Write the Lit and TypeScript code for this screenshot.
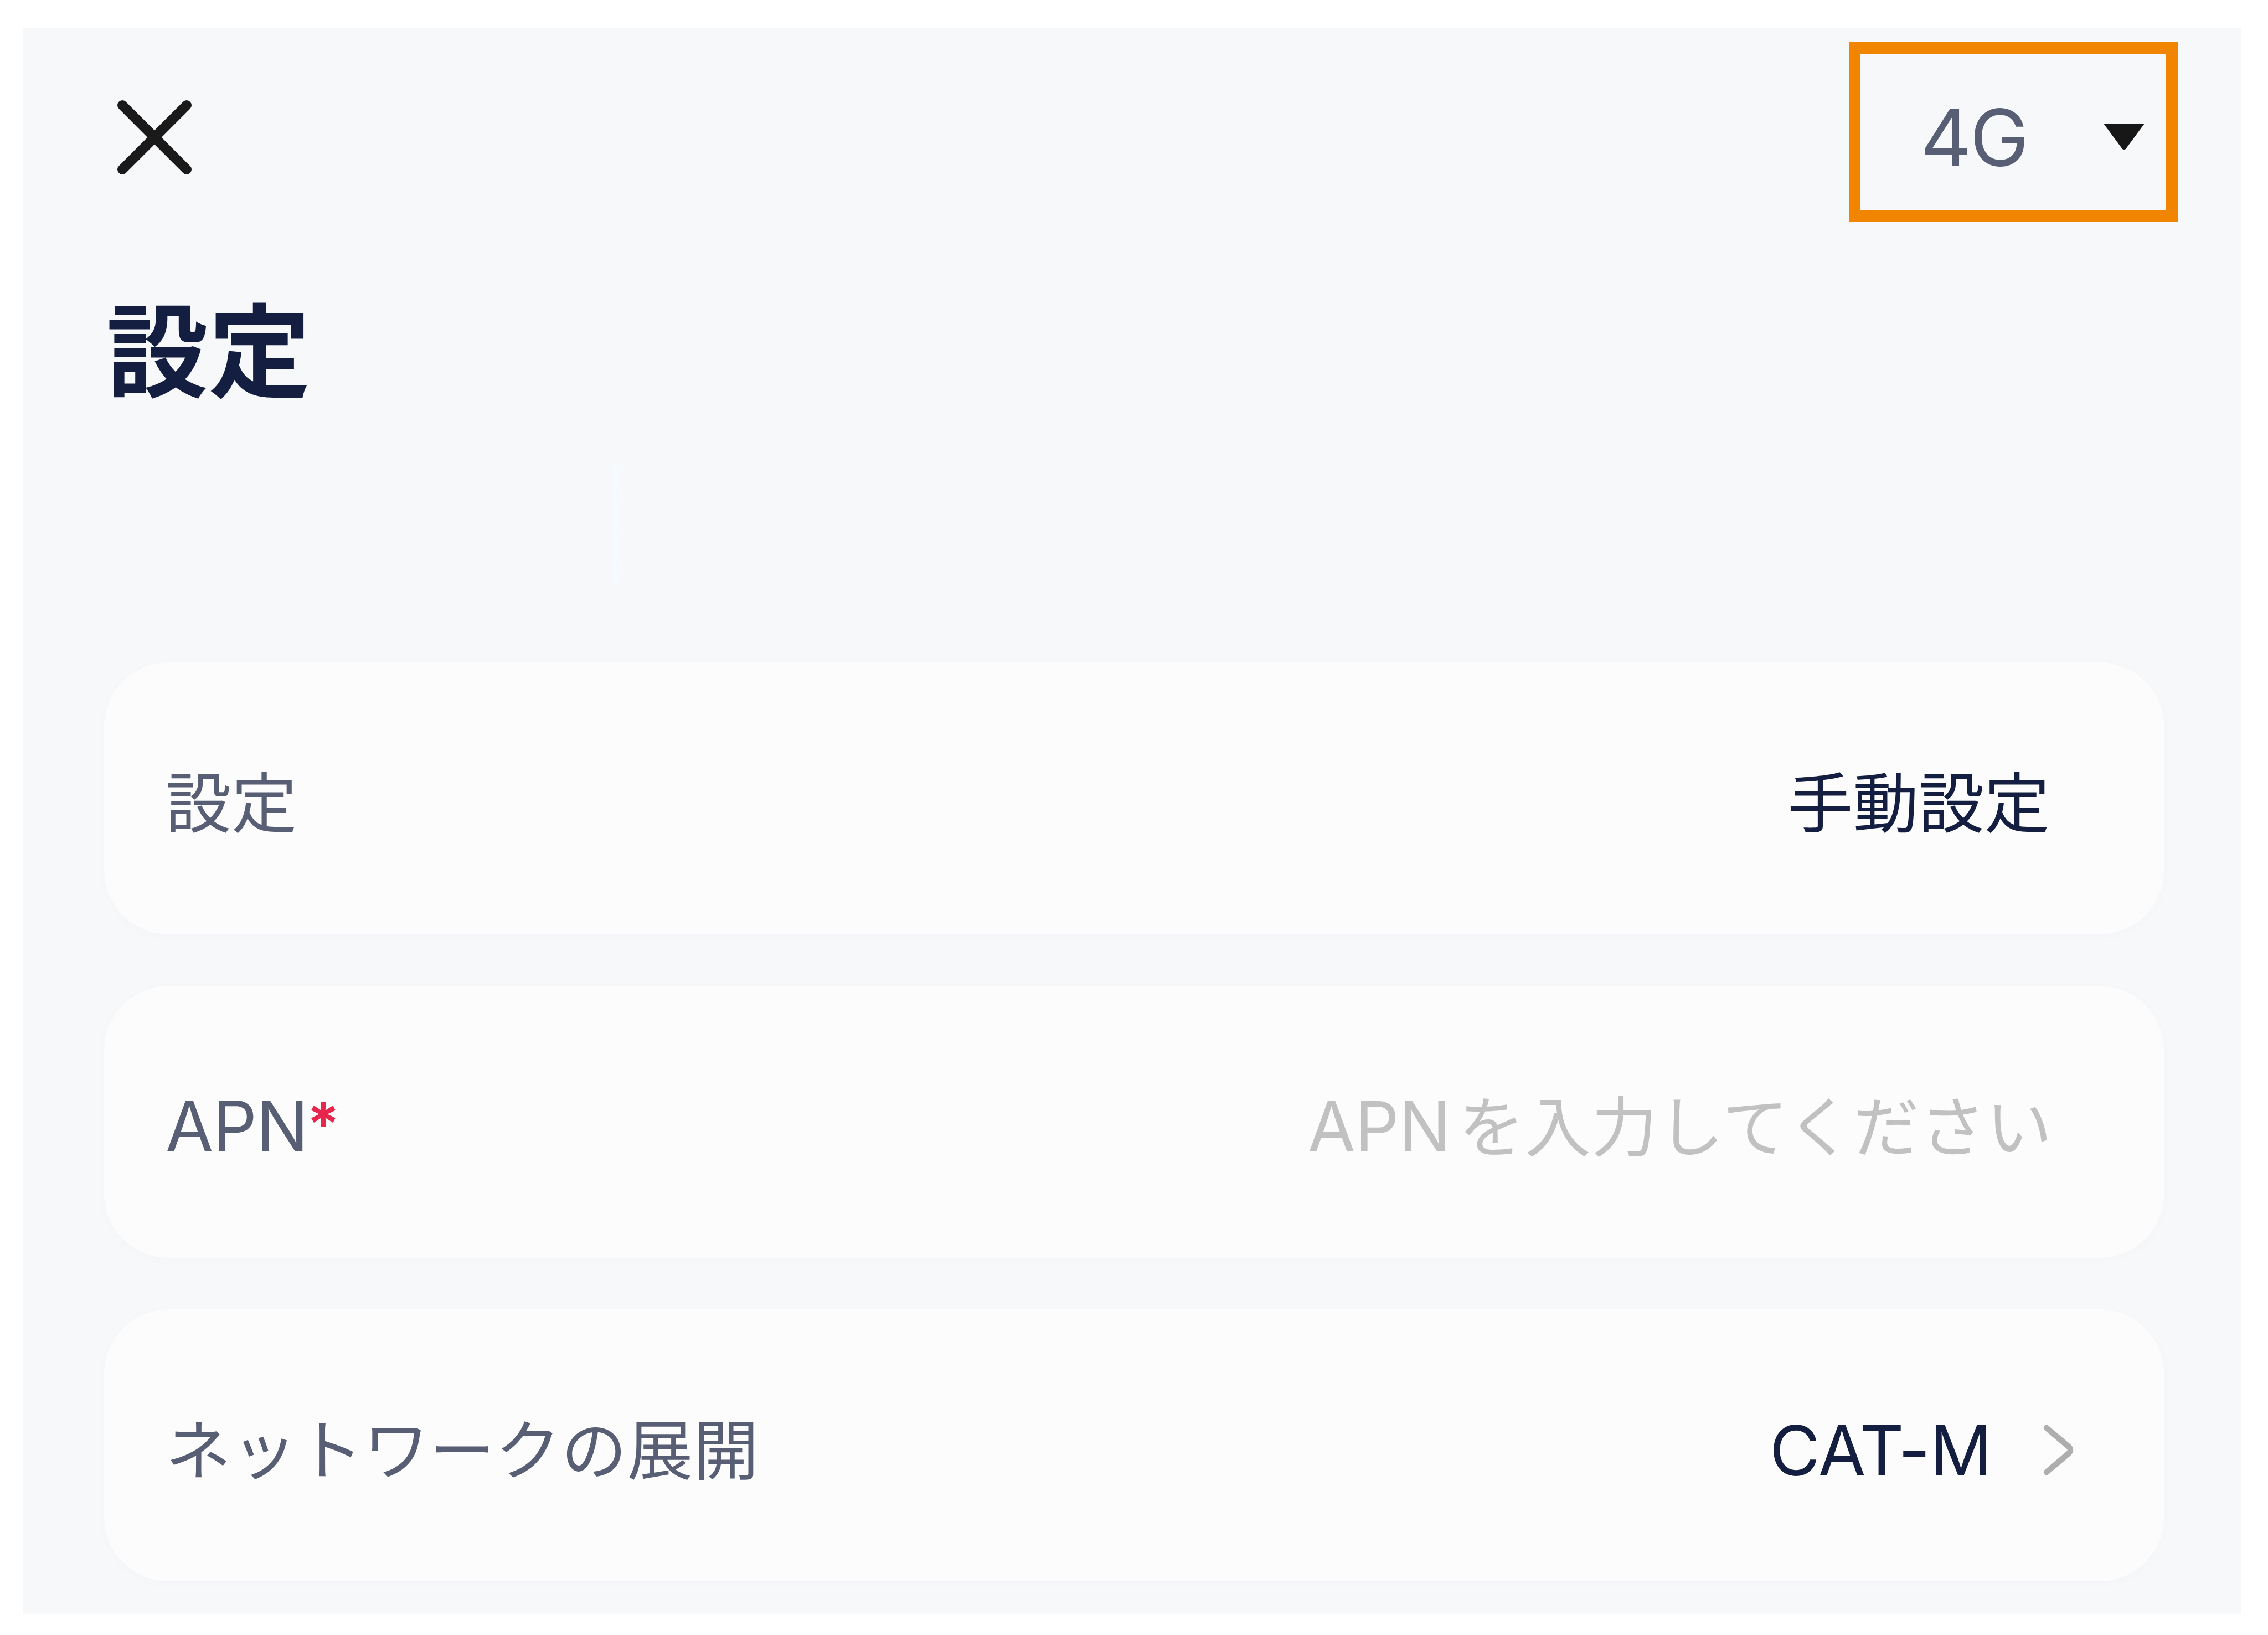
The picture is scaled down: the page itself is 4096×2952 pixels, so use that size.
import { LitElement, html, css, nothing } from 'lit';
import { customElement, property } from 'lit/decorators.js';

@customElement('setting-row')
export class SettingRow extends LitElement {
  @property() label = '';
  @property() value = '';
  @property() placeholder = '';
  @property({ type: Boolean }) required = false;
  @property({ type: Boolean }) link = false;

  static styles = css`
    :host {
      display: flex;
      justify-content: space-between;
      align-items: center;
      height: 491px;
      padding: 19px 206px 0 111px;
      box-sizing: border-box;
      border-radius: 116px;
      background: #fcfcfd;
      box-shadow: 0 4px 24px rgba(70, 80, 110, 0.015);
      white-space: nowrap;
    }

    :host([link]) {
      padding-right: 163px;
    }

    .label,
    .value,
    .placeholder {
      display: flex;
      align-items: baseline;
      line-height: 160px;
    }

    .label {
      color: #585f75;
    }

    .value {
      color: #141e40;
    }

    .placeholder {
      margin-right: -5px;
      color: #c1c1c1;
    }

    .latin {
      font-size: 125px;
      letter-spacing: -1px;
    }

    .cjk {
      font-size: 118.5px;
    }

    .label .cjk {
      letter-spacing: 0.6px;
    }

    .placeholder .cjk {
      margin-left: 15px;
      font-size: 119px;
      letter-spacing: 1px;
    }

    .star {
      margin-left: -2px;
      font-size: 110px;
      font-weight: 600;
      color: #e6264c;
      transform: translateY(-9px);
    }

    .right {
      display: flex;
      align-items: center;
    }

    .chevron {
      width: 55px;
      height: 92px;
      margin: -2px 0 0 93px;
    }
  `;

  // latin runs are set a little larger than the japanese ones
  text(value: string) {
    const parts = value.match(/[\x20-\x7e]+|[^\x20-\x7e]+/g) || [];
    return parts.map(part => html`<span class="${/[\x20-\x7e]/.test(part) ? 'latin' : 'cjk'}">${part}</span>`);
  }

  render() {
    return html`
      <div class="label">
        ${this.text(this.label)}
        ${this.required ? html`<span class="star">*</span>` : nothing}
      </div>
      <div class="right">
        ${this.value
          ? html`<div class="value">${this.text(this.value)}</div>`
          : html`<div class="placeholder">${this.text(this.placeholder)}</div>`}
        ${this.link ? html`
          <svg class="chevron" viewBox="0 0 55 92" fill="none" stroke="#aeaeae" stroke-width="10.5" stroke-linecap="round" stroke-linejoin="round">
            <path d="M6 6 L46 40 Q52 46 46 52 L6 86"></path>
          </svg>` : nothing}
      </div>
    `;
  }
}

@customElement('app-root')
export class AppRoot extends LitElement {
  static styles = css`
    :host {
      display: block;
      width: 4096px;
      height: 2952px;
      padding: 50px 48px 38px 42px;
      box-sizing: border-box;
      background: #fff;
      font-family: Inter, "Noto Sans CJK JP", sans-serif;
    }

    .panel {
      display: flex;
      flex-direction: column;
      height: 2864px;
      padding: 26px 140px 0 146px;
      box-sizing: border-box;
      background: #f7f8fa;
      overflow: hidden;
    }

    .header {
      display: flex;
      justify-content: space-between;
      align-items: flex-start;
      height: 324px;
      margin-right: -25px;
    }

    .close {
      width: 134px;
      height: 134px;
      margin: 105px 0 0 24px;
    }

    .network {
      display: flex;
      align-items: center;
      justify-content: space-between;
      width: 594px;
      height: 324px;
      padding: 0 39px 0 108px;
      box-sizing: border-box;
      border: 21px solid #f28500;
      font-size: 143px;
      letter-spacing: -3px;
      color: #585f75;
    }

    .network span {
      padding-top: 18px;
    }

    .arrow {
      width: 74px;
      height: 47px;
      margin-top: 17px;
    }

    h1 {
      height: 270px;
      margin: 101px 0 0 4px;
      font-size: 184.5px;
      line-height: 270px;
      font-weight: 700;
      color: #141e40;
    }

    .divider {
      width: 22px;
      height: 217px;
      margin: 69px 0 0 915px;
      background: linear-gradient(90deg, #f5faff 30%, #f7f8fc);
    }

    .rows {
      display: flex;
      flex-direction: column;
      gap: 93px;
      margin-top: 139px;
    }
  `;

  render() {
    return html`
      <div class="panel">
        <div class="header">
          <svg class="close" viewBox="0 0 134 134" stroke="#1a1a1a" stroke-width="18" stroke-linecap="round">
            <path d="M9 9 L125 125 M125 9 L9 125"></path>
          </svg>
          <div class="network">
            <span>4G</span>
            <svg class="arrow" viewBox="0 0 74 47"><path d="M0 0 H74 L40 46 Q37 48 34 46 Z" fill="#171717"></path></svg>
          </div>
        </div>
        <h1>設定</h1>
        <div class="divider"></div>
        <div class="rows">
          <setting-row label="設定" value="手動設定"></setting-row>
          <setting-row label="APN" placeholder="APNを入力してください" required></setting-row>
          <setting-row label="ネットワークの展開" value="CAT-M" link></setting-row>
        </div>
      </div>
    `;
  }
}
